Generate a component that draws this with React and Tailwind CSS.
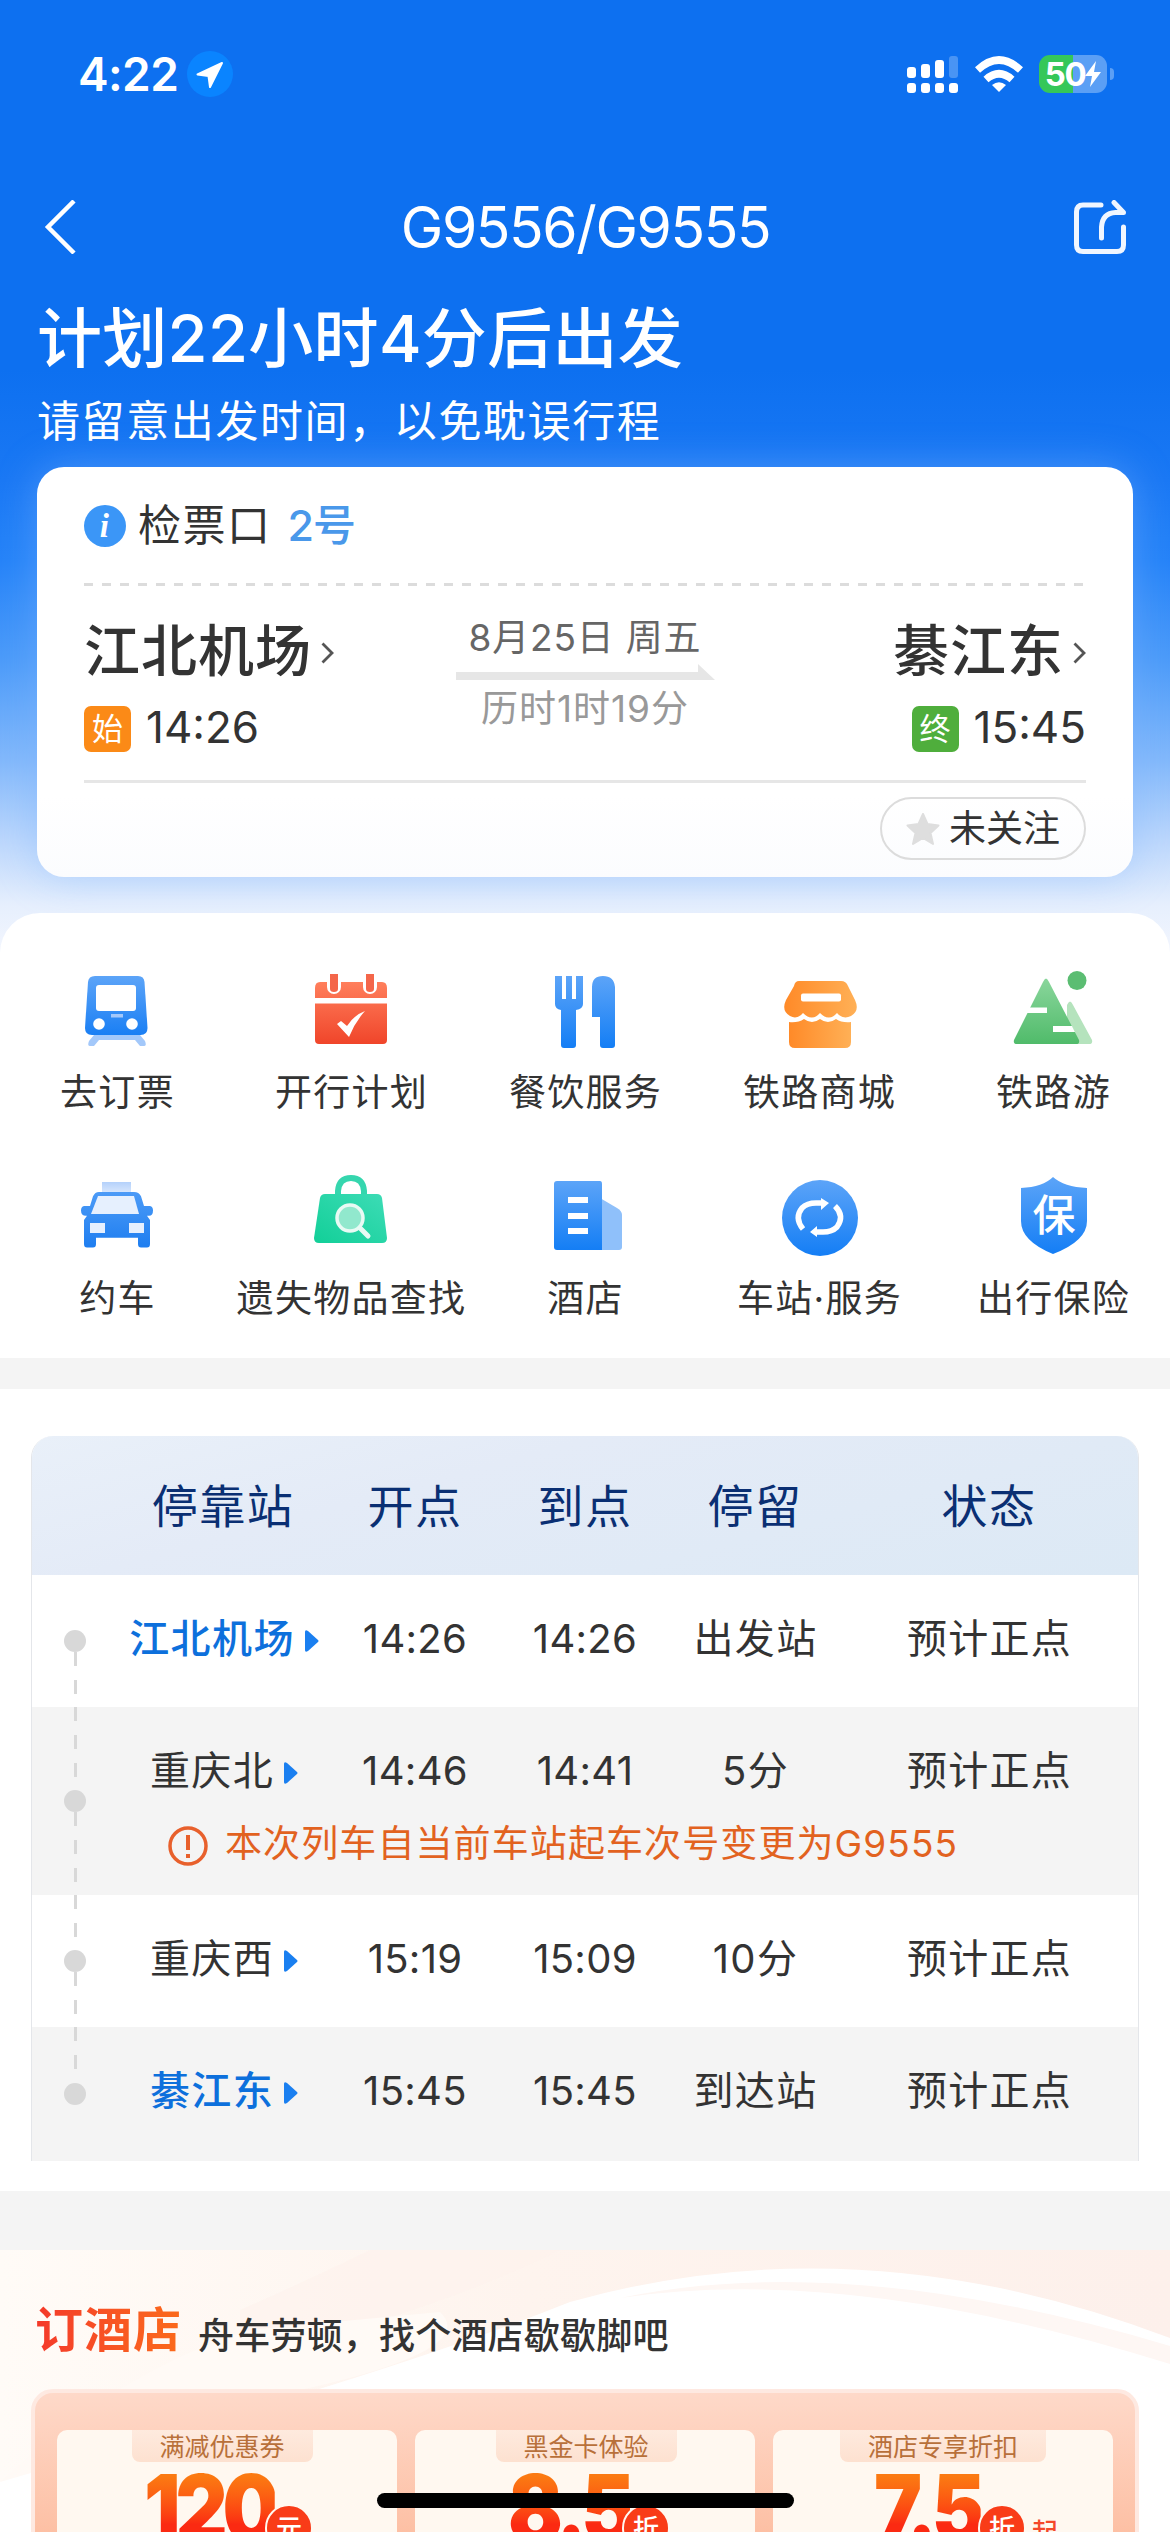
import React from "react";

const STOPS = [
  { name: "江北机场", depart: "14:26", arrive: "14:26", stay: "出发站", status: "预计正点", active: true },
  {
    name: "重庆北",
    depart: "14:46",
    arrive: "14:41",
    stay: "5分",
    status: "预计正点",
    note: "本次列车自当前车站起车次号变更为G9555",
  },
  { name: "重庆西", depart: "15:19", arrive: "15:09", stay: "10分", status: "预计正点" },
  { name: "綦江东", depart: "15:45", arrive: "15:45", stay: "到达站", status: "预计正点", active: true },
];

const Gradient = ({ id, from, to, horizontal }) => (
  <linearGradient id={id} x1="0" y1="0" x2={horizontal ? "1" : "0"} y2={horizontal ? "0" : "1"}>
    <stop offset="0" stopColor={from} />
    <stop offset="1" stopColor={to} />
  </linearGradient>
);

const Icon = ({ children }) => (
  <svg viewBox="0 0 80 80" className="h-20 w-20 overflow-visible">
    {children}
  </svg>
);

const TrainIcon = () => (
  <Icon>
    <defs><Gradient id="train" from="#5ca4f8" to="#1a7ff4" /></defs>
    <path d="M17 65h46l5 6q2 5-1 5h-4l-5-6H22l-5 6h-4q-3 0-1-5z" fill="#a3c8fa" />
    <path d="M18 6h43q6 0 6.500 6l3 46q0 7-7 7H15q-7 0-7-7l3-46q.5-6 7-6z" fill="url(#train)" />
    <rect x="19" y="15" width="40" height="26" rx="3" fill="#fff" />
    <rect x="34" y="44" width="12" height="3.500" fill="#a3c8fa" />
    <circle cx="22" cy="54" r="5.800" fill="#fff" />
    <circle cx="55" cy="54" r="5.800" fill="#fff" />
  </Icon>
);

const CalendarIcon = () => (
  <Icon>
    <defs><Gradient id="calendar" from="#ff7f5c" to="#f0452a" /></defs>
    <path d="M9 12h62q5 0 5 6v10H4V18q0-6 5-6zM4 33.500h72V70q0 4-4 4H8q-4 0-4-4z" fill="url(#calendar)" />
    <path d="M23 6v11M59 6v11" stroke="#fff" strokeWidth="14" strokeLinecap="round" />
    <path d="M19 4h8v15q0 3-4 3t-4-3zM55 4h8v15q0 3-4 3t-4-3z" fill="#f4664a" />
    <path d="M26 54l4-3 6 5q7-11 18-15-10 11-16 26z" fill="#fff" />
  </Icon>
);

const FoodIcon = () => (
  <Icon>
    <defs><Gradient id="food" from="#5ca4f8" to="#147ef5" /></defs>
    <path
      d="M10 6h7v23h4V6h6v23h4V6h7v28q0 5-7 6v35q0 3-3 3h-9q-3 0-3-3V40q-6-1-6-6zM47 17q0-11 11-11t12 11v58q0 3-3 3h-9q-3 0-3-3V47h-8z"
      fill="url(#food)"
    />
  </Icon>
);

const StoreIcon = () => (
  <Icon>
    <defs><Gradient id="store" from="#ff8a28" to="#ffb056" horizontal /></defs>
    <path
      d="M20 11h42q5 0 7 5l7 14q5 11-4 16-8 4-14-3-8 9-17 0-8 9-17 0-6 7-13 3-9-5-4-16l8-14q1-5 5-5z"
      fill="url(#store)"
    />
    <path d="M10 52q9 1 15-3 8 6 16 0 8 6 16 0 6 4 15 3v20q0 6-6 6H16q-6 0-6-6z" fill="url(#store)" />
    <rect x="22" y="23.500" width="40" height="8" rx="2" fill="#fff" />
  </Icon>
);

const MountainIcon = () => (
  <Icon>
    <defs><Gradient id="mountain" from="#8ad69c" to="#50bb6a" /></defs>
    <path d="M54 35q3-7 6 0l19 35q1 4-3 4H54z" fill="#b5e3bd" />
    <path d="M30 12q3-7 6 0l30 58q1 4-3 4H4q-4 0-3-4z" fill="url(#mountain)" />
    <circle cx="64" cy="10.500" r="9.500" fill="#5bbd72" />
    <path d="M14 37.500h20v5.500H11zM40 56h19l3 6H40z" fill="#fff" />
  </Icon>
);

const TaxiIcon = () => (
  <Icon>
    <defs>
      <Gradient id="taxi" from="#4c9bf7" to="#1e7ef0" />
      <Gradient id="sign" from="#b4d1fb" to="#dfebfd" />
    </defs>
    <rect x="25" y="6" width="29" height="13" fill="url(#sign)" />
    <path
      d="M22 17h35q5 0 7 5l3 11h6q3 1 3 5 0 6-4 6h-2l3 5v27q0 4-3 4h-6q-3 0-3-4v-7H19v7q0 4-3 4h-6q-3 0-3-4V49l3-5H9q-5 0-5-6 0-4 3-5h6l3-11q2-5 6-5z"
      transform="translate(0 1) scale(1 .88)"
      fill="url(#taxi)"
    />
    <path d="M21 20h36l5 18H14z" fill="#e6f0fe" />
    <path d="M13 47h15v10H13zM52 47h15v10H52z" fill="#e6f0fe" />
  </Icon>
);

const BagIcon = () => (
  <Icon>
    <defs>
      <linearGradient id="bag" x1="0" y1="1" x2="1" y2="0">
        <stop offset="0" stopColor="#12cf98" />
        <stop offset="1" stopColor="#3ddcb6" />
      </linearGradient>
    </defs>
    <path d="M27 19v-4Q28 2 40 2t13 13v4" fill="none" stroke="#35d6ae" strokeWidth="6" />
    <path d="M14 18h52q4 0 5 4l5 40q0 5-5 5H8q-5 0-5-5l6-40q1-4 5-4z" fill="url(#bag)" />
    <path d="M50 53l7 7" stroke="#e8faf4" strokeWidth="5" strokeLinecap="round" />
    <circle cx="39" cy="42" r="13" fill="#91e8cd" stroke="#e8faf4" strokeWidth="3.500" />
  </Icon>
);

const HotelIcon = () => (
  <Icon>
    <defs><Gradient id="hotel" from="#5ca4f8" to="#147ef5" /></defs>
    <path d="M55 22l17 10q5 3 5 7v32q0 3-3 3H55z" fill="#8fc0fa" />
    <path d="M12 5h43q2 0 2 3v66H12q-3 0-3-3V8q0-3 3-3z" fill="url(#hotel)" />
    <path d="M23 21h20v6H23zM23 37h20v6H23zM23 52h20v6H23z" fill="#fff" />
  </Icon>
);

const StationIcon = () => (
  <Icon>
    <defs><Gradient id="station" from="#5ca4f8" to="#147ef5" /></defs>
    <circle cx="41" cy="42" r="38" fill="url(#station)" />
    <g fill="none" stroke="#fff" strokeWidth="5.500">
      <path d="M24 53Q15 42 23 32q5-5 14-5h8" />
      <path d="M56 30q10 10 2 21-5 5-14 5h-7" />
    </g>
    <path d="M42 22l8 5-8 7zM38 50l-7 6 7 5z" fill="#fff" />
  </Icon>
);

const ShieldIcon = () => (
  <Icon>
    <defs><Gradient id="shield" from="#5ca4f8" to="#147ef5" /></defs>
    <path d="M40 1q11 10 34 11v33q0 20-34 33Q8 65 8 45V12Q30 11 40 1z" fill="url(#shield)" />
    <text x="41" y="55" textAnchor="middle" fontSize="43" fontWeight="500" fill="#fff">保</text>
  </Icon>
);

const SERVICES = [
  { label: "去订票", icon: TrainIcon },
  { label: "开行计划", icon: CalendarIcon },
  { label: "餐饮服务", icon: FoodIcon },
  { label: "铁路商城", icon: StoreIcon },
  { label: "铁路游", icon: MountainIcon },
  { label: "约车", icon: TaxiIcon },
  { label: "遗失物品查找", icon: BagIcon },
  { label: "酒店", icon: HotelIcon },
  { label: "车站·服务", icon: StationIcon },
  { label: "出行保险", icon: ShieldIcon },
];

const StatusBar = () => (
  <div className="flex h-[148px] items-center pl-[78px] pr-[56px]">
    <span className="text-[46px] font-semibold leading-none tracking-[-0.6px]">4:22</span>
    <svg viewBox="0 0 46 46" className="ml-[9px] h-[46px] w-[46px]">
      <circle cx="23" cy="23" r="23" fill="#0a84ff" />
      <path d="M35 12L23 36 21.500 25 10.500 23.500z" fill="#fff" stroke="#fff" strokeWidth="2" strokeLinejoin="round" />
    </svg>
    <svg viewBox="0 0 51 38" className="ml-auto h-[38px] w-[51px]" fill="#fff">
      <rect x="0" y="12" width="9" height="11" rx="3" />
      <rect x="14" y="9" width="9" height="14" rx="3" />
      <rect x="28" y="5" width="9" height="18" rx="3" />
      <rect x="42" y="1" width="9" height="22" rx="3" opacity="0.25" />
      <rect x="0" y="28" width="9" height="10" rx="3" />
      <rect x="14" y="28" width="9" height="10" rx="3" />
      <rect x="28" y="28" width="9" height="10" rx="3" />
      <rect x="42" y="28" width="9" height="10" rx="3" />
    </svg>
    <svg viewBox="0 0 48 36" className="ml-[17px] h-9 w-12" fill="none" stroke="#fff" strokeWidth="7.500">
      <path d="M2.500 14Q24-6 45.500 14" />
      <path d="M11 23.500Q24 12 37 23.500" />
      <path d="M17 29Q24 23.500 31 29L24 36z" fill="#fff" stroke="none" />
    </svg>
    <div className="ml-[16px] flex h-[38px] w-[68px] items-center justify-center rounded-[11px] bg-[linear-gradient(90deg,#35c759_50%,#5b9ff5_50%)]">
      <span className="text-[33px] font-bold leading-none tracking-[-1.500px]">50</span>
      <svg viewBox="0 0 16 26" className="h-[26px] w-4" fill="#fff">
        <path d="M11 0L0 15h7L5 26l11-15H9z" />
      </svg>
    </div>
    <div className="ml-[3px] h-3 w-1 rounded-r-full bg-[#5b9ff5]" />
  </div>
);

const Chevron = () => (
  <svg viewBox="0 0 13 22" className="mt-1 h-[22px] w-[13px]" fill="none" stroke="#555" strokeWidth="2.800">
    <path d="M1.500 1.500L11 11 1.500 20.500" />
  </svg>
);

const TripCard = () => (
  <div className="mx-[37px] mt-[15px] h-[410px] rounded-[27px] bg-gradient-to-b from-white from-80% to-[#fbfcfe] px-[47px] text-[#333] shadow-[0_0_40px_rgba(130,185,255,0.45)]">
    <div className="flex h-[116px] items-center text-[43px] tracking-[1.500px]">
      <svg viewBox="0 0 42 42" className="mt-0.5 h-[42px] w-[42px]">
        <circle cx="21" cy="21" r="21" fill="#3b96f7" />
        <text x="21" y="32" textAnchor="middle" fontSize="33" fontStyle="italic" fontWeight="bold" fontFamily="Liberation Serif, serif" fill="#fff">i</text>
      </svg>
      <span className="ml-3">检票口</span>
      <span className="ml-4 font-medium tracking-[-1px] text-[#4a98ea]">2号</span>
    </div>
    <div className="h-[3px] bg-[repeating-linear-gradient(90deg,#dcdcdc_0_9px,transparent_9px_18px)]" />
    <div className="grid h-[194px] grid-cols-[1fr_259px_1fr]">
      <div className="pt-[33px]">
        <div className="flex h-16 items-center gap-[9px] whitespace-nowrap text-[56px] font-medium tracking-[1px]">
          江北机场
          <Chevron />
        </div>
        <div className="mt-[23px] flex h-[46px] items-center gap-[15px] text-[44px]">
          <span className="flex h-[46px] w-[47px] items-center justify-center rounded-[7px] bg-[#fb8a17] text-[31px] text-white">始</span>
          <span className="-mt-1">14:26</span>
        </div>
      </div>
      <div className="flex flex-col items-center whitespace-nowrap">
        <div className="mt-[28px] h-[47px] text-[37px] leading-[48px] tracking-[0.800px] text-[#666]">8月25日 周五</div>
        <svg viewBox="0 0 259 16" className="mt-[3px] h-4 w-[259px]" fill="#e6e6e6">
          <path d="M0 8h242V0l17 16H0z" />
        </svg>
        <div className="mt-[5px] h-[48px] text-[37px] leading-[48px] tracking-[1px] text-[#999]">历时1时19分</div>
      </div>
      <div className="flex flex-col items-end pt-[33px]">
        <div className="flex h-16 items-center gap-[9px] whitespace-nowrap text-[56px] font-medium tracking-[1px]">
          綦江东
          <Chevron />
        </div>
        <div className="mt-[23px] flex h-[46px] items-center gap-[15px] text-[44px]">
          <span className="flex h-[46px] w-[47px] items-center justify-center rounded-[7px] bg-[#4fae3c] text-[31px] text-white">终</span>
          <span className="-mt-1">15:45</span>
        </div>
      </div>
    </div>
    <div className="h-[3px] bg-[#e6e6e6]" />
    <div className="flex justify-end pt-[14px]">
      <button className="flex h-[63px] w-[206px] items-center justify-center gap-[9px] rounded-full border-2 border-[#dcdcdc] text-[37px]">
        <svg viewBox="0 0 34 32" className="h-8 w-[34px]" fill="#dedede" stroke="#dedede" strokeWidth="2" strokeLinejoin="round">
          <path d="M17 1l4.500 10 11 1.500-8 7.500 2.500 11-10-6-10 6 2.500-11-8-7.500 11-1.500z" />
        </svg>
        未关注
      </button>
    </div>
  </div>
);

const Header = () => (
  <header className="h-[953px] bg-[linear-gradient(180deg,#0d70f0_0px,#0d70f0_370px,#1a78f4_480px,#2583f8_560px,#4c9bf9_660px,#82b8fb_760px,#bcd7fc_840px,#e6effd_905px,#f3f6fe_953px)] text-white">
    <StatusBar />
    <div className="flex h-[158px] items-center justify-between pl-11 pr-[43px]">
      <svg viewBox="0 0 32 54" className="h-[54px] w-[54px]" preserveAspectRatio="xMinYMid" fill="none" stroke="#fff" strokeWidth="4.500">
        <path d="M30 1L4 27l26 26" />
      </svg>
      <h1 className="text-[57px] leading-none tracking-[-1.4px]">G9556/G9555</h1>
      <svg
        viewBox="0 0 54 54"
        className="h-[54px] w-[54px]"
        fill="none"
        stroke="#f0f6ff"
        strokeWidth="5"
        strokeLinecap="round"
        strokeLinejoin="round"
      >
        <path d="M28 5H10Q3.500 5 3.500 12v33q0 6.500 6.500 6.500h34q6.500 0 6.500-6.500V27" />
        <path d="M28.500 38V27q1-14 14-14.500h8L41 2.500" />
      </svg>
    </div>
    <div className="flex h-[66px] items-center pl-[37px] text-[65px] font-medium tracking-[0.300px]">计划22小时4分后出发</div>
    <div className="mt-[18px] flex h-[62px] items-center pl-[37px] text-[43px] tracking-[1.600px]">请留意出发时间，以免耽误行程</div>
    <TripCard />
  </header>
);

const Services = () => (
  <section className="relative -mt-10 h-[445px] rounded-t-[40px] bg-white pt-[57px]">
    <div className="grid grid-cols-5 gap-y-[38px]">
      {SERVICES.map(({ label, icon: ServiceIcon }) => (
        <div key={label} className="flex h-[168px] flex-col items-center">
          <ServiceIcon />
          <span className="mt-[15px] whitespace-nowrap pl-px text-[37px] leading-[56px] tracking-[1.300px] text-[#333]">{label}</span>
        </div>
      ))}
    </div>
  </section>
);

const DASH = "w-[3px] flex-1 bg-[repeating-linear-gradient(180deg,#d8d8d8_0_14px,transparent_14px_28px)]";

const StopRow = ({ stop, index }) => (
  <div className={`flex ${index % 2 ? "bg-[#f4f4f4]" : "bg-white"} ${stop.note ? "h-[188px]" : index === 3 ? "h-[134px]" : "h-[132px]"}`}>
    <div className="flex w-[84px] flex-col items-center pl-[2px]">
      <div className={index === 0 ? "flex-1" : DASH} />
      <div className="h-[22px] w-[22px] rounded-full bg-[#d8d8d8]" />
      <div className={index === 3 ? "flex-1" : DASH} />
    </div>
    <div className="flex-1">
      <div className="grid h-[128px] grid-cols-[214px_170px_170px_170px_1fr] items-center text-center text-[40px] text-[#333]">
        <div className={`flex items-center justify-center gap-[10px] pl-[2px] tracking-[1.400px] ${stop.active ? "font-medium text-[#0d70dc]" : ""}`}>
          {stop.name}
          <svg viewBox="0 0 14 22" className="mt-1 h-[22px] w-[14px]" fill="#1a7ff0">
            <path d="M0 2q0-3 3-1l10 9q1 1 0 2L3 21q-3 2-3-1z" />
          </svg>
        </div>
        <div className="tracking-[0.300px]">{stop.depart}</div>
        <div className="tracking-[0.300px]">{stop.arrive}</div>
        <div className="pl-px tracking-[1.300px]">{stop.stay}</div>
        <div className="pl-px tracking-[1.300px]">{stop.status}</div>
      </div>
      {stop.note && (
        <div className="-mt-[18px] flex h-[54px] items-center gap-[17px] pl-[52px] text-[37px] tracking-[1.100px] text-[#e2621f]">
          <svg viewBox="0 0 40 40" className="mt-1 h-10 w-10" fill="none" stroke="#e8602c" strokeWidth="3.500">
            <circle cx="20" cy="20" r="18" />
            <path d="M20 9v15M20 28v4" strokeWidth="4" />
          </svg>
          {stop.note}
        </div>
      )}
    </div>
  </div>
);

const Timetable = () => (
  <section className="h-[802px] bg-white px-[31px] pt-[47px]">
    <div className="overflow-hidden rounded-t-[22px] border-x border-[#e4e6ea]">
      <div className="grid h-[139px] grid-cols-[84px_214px_170px_170px_170px_1fr] items-center bg-[linear-gradient(165deg,#e9f0f9,#e4ebf7_35%,#dce9f5)] pt-0.5 text-center text-[46px] tracking-[1.500px] text-[#0a2f73]">
        <span />
        <span>停靠站</span>
        <span>开点</span>
        <span>到点</span>
        <span>停留</span>
        <span>状态</span>
      </div>
      {STOPS.map((stop, i) => (
        <StopRow key={stop.name} stop={stop} index={i} />
      ))}
    </div>
  </section>
);

const OFFERS = [
  { tag: "满减优惠券", value: "120", unit: "元", tagClass: "w-[181px] mr-[10px]", pad: "pl-[87px]", valueClass: "w-[121px]" },
  { tag: "黑金卡体验", value: "8.5", unit: "折", tagClass: "w-[181px] ml-[2px]", pad: "pl-[93px]", valueClass: "w-[114px]" },
  { tag: "酒店专享折扣", value: "7.5", unit: "折", suffix: "起", tagClass: "w-[206px]", pad: "pl-[101px]", valueClass: "w-[104px]" },
];

const Offer = ({ offer }) => (
  <div className="flex h-[160px] flex-1 flex-col items-center rounded-t-[10px] bg-[#fff8f0]">
    <div className={`h-8 rounded-b-lg bg-gradient-to-b from-[#feeade] to-[#fde1d0] text-center text-[25px] leading-[34px] text-[#b8703a] ${offer.tagClass}`}>
      {offer.tag}
    </div>
    <div className={`mt-[6px] flex w-full items-start ${offer.pad}`}>
      <span className={`shrink-0 ${offer.valueClass}`}>
        <span className="inline-block origin-left scale-x-[0.86] bg-gradient-to-b from-[#fb7a12] from-10% to-[#fb2a12] to-70% bg-clip-text text-[94px] font-black leading-[80px] tracking-[-6px] text-transparent">
          {offer.value}
        </span>
      </span>
      <span className="relative mt-[36px] flex h-[48px] w-[48px] shrink-0 items-center justify-center rounded-full border-2 border-[#fff8f0] bg-[#f93c18] text-[26px] font-medium text-white">
        {offer.unit}
      </span>
      {offer.suffix && <span className="ml-1.5 mt-[45px] text-[26px] font-medium text-[#f4482a]">{offer.suffix}</span>}
    </div>
  </div>
);

const HotelSection = () => (
  <section className="relative h-[282px] overflow-hidden bg-[#fffbf7]">
    <svg viewBox="0 0 1170 282" className="absolute inset-0 h-full w-full">
      <defs>
        <linearGradient id="dune" x1="0" y1="0" x2="1" y2="0">
          <stop offset="0" stopColor="#fffbf7" />
          <stop offset="0.45" stopColor="#fef4ee" />
          <stop offset="1" stopColor="#fdf0eb" />
        </linearGradient>
      </defs>
      <path d="M0 0H1170V282H0z" fill="url(#dune)" />
      <path d="M240 60Q300 34 370 0H560Q440 60 240 110z" fill="#fef2ec" opacity="0.6" />
      <path d="M0 232Q60 205 110 200 400 120 570 52 860-30 1170 88V282H0z" fill="#fff" />
      <path d="M0 232Q120 120 250 80L440 62Q480 100 300 140L110 200z" fill="#fffaf6" />
      <path d="M620 48Q850 14 1170 114V96Q850 0 620 48z" fill="#fef7f4" />
    </svg>
    <div className="relative flex h-[139px] items-end pl-[35px]">
      <h2 className="mb-6 bg-gradient-to-r from-[#f4382a] to-[#fb6a1a] bg-clip-text text-[48px] font-bold leading-[70px] tracking-[1px] text-transparent">订酒店</h2>
      <p className="mb-[27px] ml-[16px] text-[36px] font-medium leading-[52px] tracking-[0.200px] text-[#333]">舟车劳顿，找个酒店歇歇脚吧</p>
    </div>
    <div className="relative mx-[31px] flex h-[200px] gap-[18px] rounded-t-[22px] border-4 border-[#fee9e1] bg-gradient-to-b from-[#fed9c9] to-[#fcb696] px-[22px] pt-[37px]">
      {OFFERS.map((offer) => (
        <Offer key={offer.tag} offer={offer} />
      ))}
    </div>
  </section>
);

const App = () => (
  <div
    lang="zh-CN"
    className="relative h-[2532px] w-[1170px] overflow-hidden bg-[#f4f4f4] font-['Inter','Noto_Sans_CJK_SC',sans-serif]"
  >
    <Header />
    <Services />
    <div className="h-[31px]" />
    <Timetable />
    <div className="h-[59px]" />
    <HotelSection />
    {/* Home indicator */}
    <div className="absolute bottom-6 left-[377px] h-[15px] w-[417px] rounded-full bg-black" />
  </div>
);

export default App;
